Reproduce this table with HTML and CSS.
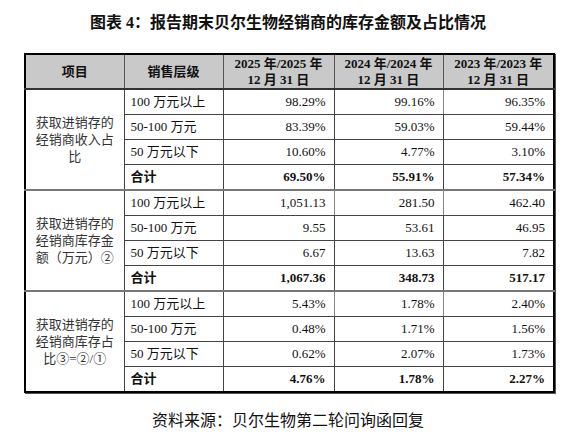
FILE: index.html
```html
<!DOCTYPE html>
<html lang="zh-CN">
<head>
    <meta charset="UTF-8">
    <title>经销商库存金额及占比</title>
    <link rel="stylesheet" href="styles.css">
</head>
<body>
    <div class="title">图表 4：报告期末贝尔生物经销商的库存金额及占比情况</div>
    <table class="data">
        <colgroup>
            <col class="c1"><col class="c2"><col class="c3"><col class="c4"><col class="c5">
        </colgroup>
        <thead>
            <tr>
                <th>项目</th>
                <th>销售层级</th>
                <th>2025 年/2025 年<br>12 月 31 日</th>
                <th>2024 年/2024 年<br>12 月 31 日</th>
                <th>2023 年/2023 年<br>12 月 31 日</th>
            </tr>
        </thead>
        <tbody>
            <!-- 收入占比 -->
            <tr>
                <td class="item" rowspan="4">获取进销存的<br>经销商收入占<br>比</td>
                <td class="lvl">100 万元以上</td><td>98.29%</td><td>99.16%</td><td>96.35%</td>
            </tr>
            <tr><td class="lvl">50-100 万元</td><td>83.39%</td><td>59.03%</td><td>59.44%</td></tr>
            <tr><td class="lvl">50 万元以下</td><td>10.60%</td><td>4.77%</td><td>3.10%</td></tr>
            <tr class="sum"><td class="lvl">合计</td><td>69.50%</td><td>55.91%</td><td>57.34%</td></tr>
            <!-- 库存金额 -->
            <tr class="group">
                <td class="item" rowspan="4">获取进销存的<br>经销商库存金<br>额（万元）②</td>
                <td class="lvl">100 万元以上</td><td>1,051.13</td><td>281.50</td><td>462.40</td>
            </tr>
            <tr><td class="lvl">50-100 万元</td><td>9.55</td><td>53.61</td><td>46.95</td></tr>
            <tr><td class="lvl">50 万元以下</td><td>6.67</td><td>13.63</td><td>7.82</td></tr>
            <tr class="sum"><td class="lvl">合计</td><td>1,067.36</td><td>348.73</td><td>517.17</td></tr>
            <!-- 库存占比 -->
            <tr class="group">
                <td class="item" rowspan="4">获取进销存的<br>经销商库存占<br>比③=②/①</td>
                <td class="lvl">100 万元以上</td><td>5.43%</td><td>1.78%</td><td>2.40%</td>
            </tr>
            <tr><td class="lvl">50-100 万元</td><td>0.48%</td><td>1.71%</td><td>1.56%</td></tr>
            <tr><td class="lvl">50 万元以下</td><td>0.62%</td><td>2.07%</td><td>1.73%</td></tr>
            <tr class="sum"><td class="lvl">合计</td><td>4.76%</td><td>1.78%</td><td>2.27%</td></tr>
        </tbody>
    </table>
    <div class="source">资料来源：贝尔生物第二轮问询函回复</div>
</body>
</html>
```

FILE: styles.css
```css
body{
    margin: 0;
    background: #fff;
    color: #111;
    font-family: "Liberation Serif", "Noto Sans CJK SC", serif;
}
.title{
    margin-top: 11px;
    height: 24px;
    line-height: 24px;
    text-align: center;
    font-size: 16px;
    font-weight: bold;
    font-family: "Liberation Serif", "Noto Sans CJK SC", serif;
}
.data{
    margin: 18px 0 0 24px;
    width: 529px;
    border-collapse: collapse;
    border: 2px solid #000;
    box-shadow: 1px 1px 0 #555;
    font-size: 13px;
    table-layout: fixed;
}
.c1{ width: 99px; }
.c2{ width: 99px; }
.c3{ width: 111px; }
.c4{ width: 109px; }
.c5{ width: 111px; }
.data th{
    background: #c9c9c9;
    height: 33px;
    padding: 0;
    line-height: 16px;
    font-weight: bold;
    border: 1px solid #555;
    border-bottom: 2px solid #333;
}
.data td{
    height: 24px;
    padding: 0 8px 0 6px;
    border: 1px solid #444;
    text-align: right;
    line-height: 16px;
}
.data td.lvl{
    text-align: left;
}
.data td.item{
    text-align: center;
    line-height: 17px;
    padding: 0 4px;
    color: #333;
}
.data td:nth-child(4){
    border-right-color: #888;
}
.data tr.group td{
    border-top: 2px solid #777;
}
.data tr.group td:nth-child(4){
    border-right-color: #888;
}
.data tr.group td:nth-child(3){
    border-right-color: #888;
}
.sum td{
    font-weight: bold;
}
.sum td.lvl{
    font-weight: bold;
}
.source{
    margin-top: 14px;
    text-align: center;
    font-size: 16px;
    font-family: "Noto Sans CJK SC", sans-serif;
    color: #111;
}
```
